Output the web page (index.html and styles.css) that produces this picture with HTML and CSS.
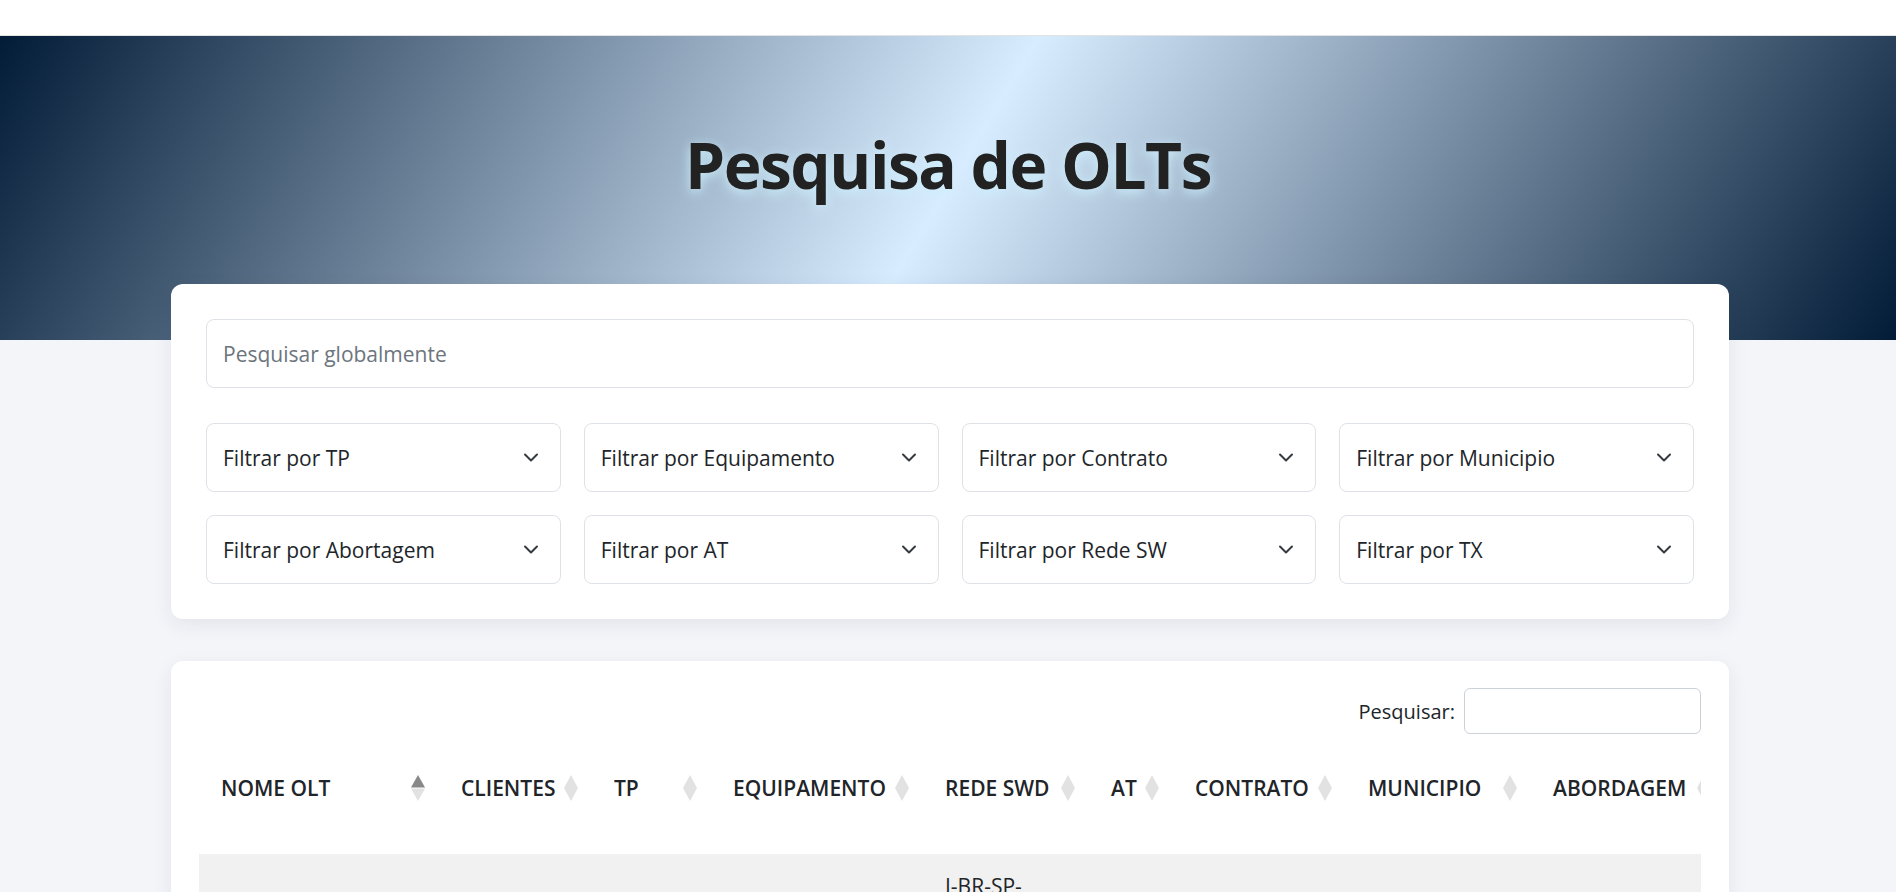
FILE: index.html
```html
<!DOCTYPE html>
<html lang="pt-BR">
<head>
<meta charset="utf-8">
<title>Pesquisa de OLTs</title>
<link rel="stylesheet" href="styles.css">
</head>
<body>
<header class="topbar"></header>
<section class="hero">
  <h1 class="hero-title">Pesquisa de OLTs</h1>
</section>
<main class="container">
  <div class="card filters-card">
    <input class="global-search" type="text" placeholder="Pesquisar globalmente">
    <div class="filter-grid">
      <div class="select"><span>Filtrar por TP</span><svg class="chev" viewBox="0 0 16 10" width="16" height="10"><polyline points="2,1.5 8,7.5 14,1.5"/></svg></div>
      <div class="select"><span>Filtrar por Equipamento</span><svg class="chev" viewBox="0 0 16 10" width="16" height="10"><polyline points="2,1.5 8,7.5 14,1.5"/></svg></div>
      <div class="select"><span>Filtrar por Contrato</span><svg class="chev" viewBox="0 0 16 10" width="16" height="10"><polyline points="2,1.5 8,7.5 14,1.5"/></svg></div>
      <div class="select"><span>Filtrar por Municipio</span><svg class="chev" viewBox="0 0 16 10" width="16" height="10"><polyline points="2,1.5 8,7.5 14,1.5"/></svg></div>
      <div class="select"><span>Filtrar por Abortagem</span><svg class="chev" viewBox="0 0 16 10" width="16" height="10"><polyline points="2,1.5 8,7.5 14,1.5"/></svg></div>
      <div class="select"><span>Filtrar por AT</span><svg class="chev" viewBox="0 0 16 10" width="16" height="10"><polyline points="2,1.5 8,7.5 14,1.5"/></svg></div>
      <div class="select"><span>Filtrar por Rede SW</span><svg class="chev" viewBox="0 0 16 10" width="16" height="10"><polyline points="2,1.5 8,7.5 14,1.5"/></svg></div>
      <div class="select"><span>Filtrar por TX</span><svg class="chev" viewBox="0 0 16 10" width="16" height="10"><polyline points="2,1.5 8,7.5 14,1.5"/></svg></div>
    </div>
  </div>

  <div class="card table-card">
    <div class="dt-toolbar">
      <label class="dt-search">Pesquisar: <input type="search"></label>
    </div>
    <div class="table-wrap">
      <table class="olt-table">
        <colgroup>
          <col class="c-nome"><col class="c-clientes"><col class="c-tp"><col class="c-equip"><col class="c-rede"><col class="c-at"><col class="c-contrato"><col class="c-mun"><col class="c-abord"><col class="c-tx">
        </colgroup>
        <thead>
          <tr>
            <th>NOME OLT<svg class="sort" viewBox="0 0 14 26" width="14" height="26"><polygon class="up active" points="7,0 14,12.5 0,12.5"/><polygon class="down" points="0,13.5 14,13.5 7,26"/></svg></th>
            <th>CLIENTES<svg class="sort" viewBox="0 0 14 26" width="14" height="26"><polygon class="up" points="7,0 14,13 0,13"/><polygon class="down" points="0,13 14,13 7,26"/></svg></th>
            <th>TP<svg class="sort" viewBox="0 0 14 26" width="14" height="26"><polygon class="up" points="7,0 14,13 0,13"/><polygon class="down" points="0,13 14,13 7,26"/></svg></th>
            <th>EQUIPAMENTO<svg class="sort" viewBox="0 0 14 26" width="14" height="26"><polygon class="up" points="7,0 14,13 0,13"/><polygon class="down" points="0,13 14,13 7,26"/></svg></th>
            <th>REDE SWD<svg class="sort" viewBox="0 0 14 26" width="14" height="26"><polygon class="up" points="7,0 14,13 0,13"/><polygon class="down" points="0,13 14,13 7,26"/></svg></th>
            <th>AT<svg class="sort" viewBox="0 0 14 26" width="14" height="26"><polygon class="up" points="7,0 14,13 0,13"/><polygon class="down" points="0,13 14,13 7,26"/></svg></th>
            <th>CONTRATO<svg class="sort" viewBox="0 0 14 26" width="14" height="26"><polygon class="up" points="7,0 14,13 0,13"/><polygon class="down" points="0,13 14,13 7,26"/></svg></th>
            <th>MUNICIPIO<svg class="sort" viewBox="0 0 14 26" width="14" height="26"><polygon class="up" points="7,0 14,13 0,13"/><polygon class="down" points="0,13 14,13 7,26"/></svg></th>
            <th>ABORDAGEM<svg class="sort" viewBox="0 0 14 26" width="14" height="26"><polygon class="up" points="7,0 14,13 0,13"/><polygon class="down" points="0,13 14,13 7,26"/></svg></th>
            <th>TX<svg class="sort" viewBox="0 0 14 26" width="14" height="26"><polygon class="up" points="7,0 14,13 0,13"/><polygon class="down" points="0,13 14,13 7,26"/></svg></th>
          </tr>
        </thead>
        <tbody>
          <tr class="odd">
            <td>OLT-SPO-IBV-01</td>
            <td>1240</td>
            <td>TP-01</td>
            <td>MA5800</td>
            <td>I-BR-SP-<br>SPO-IBV-<br>SWD-AGG-<br>01</td>
            <td>AT-1</td>
            <td>C-2024</td>
            <td>SAO PAULO</td>
            <td>FTTH</td>
            <td>TX-01</td>
          </tr>
        </tbody>
      </table>
    </div>
  </div>
</main>
</body>
</html>
```

FILE: styles.css
```css
* {
  box-sizing: border-box;
}

body {
  margin: 0;
  background: #f4f5f9;
  font-family: "Open Sans", "Noto Sans", sans-serif;
  font-size: 20px;
  color: #212529;
}

.topbar {
  height: 36px;
  background: #ffffff;
  border-bottom: 1px solid #e3e3e3;
}

.hero {
  height: 304px;
  background: linear-gradient(121deg, #021b36 0%, #d8ecff 50%, #021b36 100%);
  display: flex;
  justify-content: center;
  align-items: flex-start;
  padding-top: 89px;
}

.hero-title {
  margin: 0;
  font-size: 64px;
  line-height: 80px;
  font-weight: 700;
  letter-spacing: -1.5px;
  color: #222222;
  text-shadow: 0 3px 12px rgba(205, 240, 252, 1);
}

.container {
  width: 1558px;
  margin: -56px 0 0 calc(50% - 777px);
}

.card {
  background: #ffffff;
  border-radius: 12px;
  box-shadow: 0 6px 20px rgba(30, 40, 70, 0.08);
}

.filters-card {
  padding: 35px;
}

.global-search {
  display: block;
  width: 100%;
  height: 69px;
  border: 1px solid #dee2e6;
  border-radius: 8px;
  padding: 0 16px;
  font-family: inherit;
  font-size: 21px;
  color: #212529;
  background: #ffffff;
  outline: none;
}

.global-search::placeholder {
  color: #6c757d;
}

.filter-grid {
  margin-top: 35px;
  display: grid;
  grid-template-columns: repeat(4, 1fr);
  gap: 23px;
}

.select {
  height: 69px;
  border: 1px solid #dee2e6;
  border-radius: 8px;
  padding: 0 21px 0 16px;
  display: flex;
  align-items: center;
  justify-content: space-between;
  font-size: 21px;
  color: #212529;
  background: #ffffff;
}

.chev {
  flex: none;
  fill: none;
  stroke: #343a40;
  stroke-width: 2;
  stroke-linecap: round;
  stroke-linejoin: round;
}

.table-card {
  margin-top: 42px;
  padding: 27px 28px 0;
}

.dt-toolbar {
  display: flex;
  justify-content: flex-end;
}

.dt-search {
  display: flex;
  align-items: center;
  gap: 9px;
  font-size: 20px;
  color: #212529;
}

.dt-search input {
  width: 237px;
  height: 46px;
  border: 1px solid #ccd1da;
  border-radius: 6px;
  font-family: inherit;
  font-size: 20px;
  padding: 0 10px;
  outline: none;
}

.table-wrap {
  margin-top: 12px;
  overflow: hidden;
}

.olt-table {
  table-layout: fixed;
  width: 1646px;
  border-collapse: collapse;
}

.c-nome { width: 240px; }
.c-clientes { width: 153px; }
.c-tp { width: 119px; }
.c-equip { width: 212px; }
.c-rede { width: 166px; }
.c-at { width: 84px; }
.c-contrato { width: 173px; }
.c-mun { width: 185px; }
.c-abord { width: 194px; }
.c-tx { width: 120px; }

.olt-table th {
  position: relative;
  text-align: left;
  font-size: 21px;
  font-weight: 600;
  line-height: 28px;
  padding: 28px 30px 52px 22px;
  color: #212529;
  white-space: nowrap;
}

.sort {
  position: absolute;
  right: 14px;
  top: 29px;
}

.sort polygon {
  fill: #e2e2e2;
}

.sort polygon.active {
  fill: #888888;
}

.olt-table td {
  padding: 18px 22px;
  line-height: 28px;
  font-size: 21px;
  vertical-align: middle;
  color: #212529;
}

.olt-table tr.odd td {
  background: #f1f1f1;
}
```
